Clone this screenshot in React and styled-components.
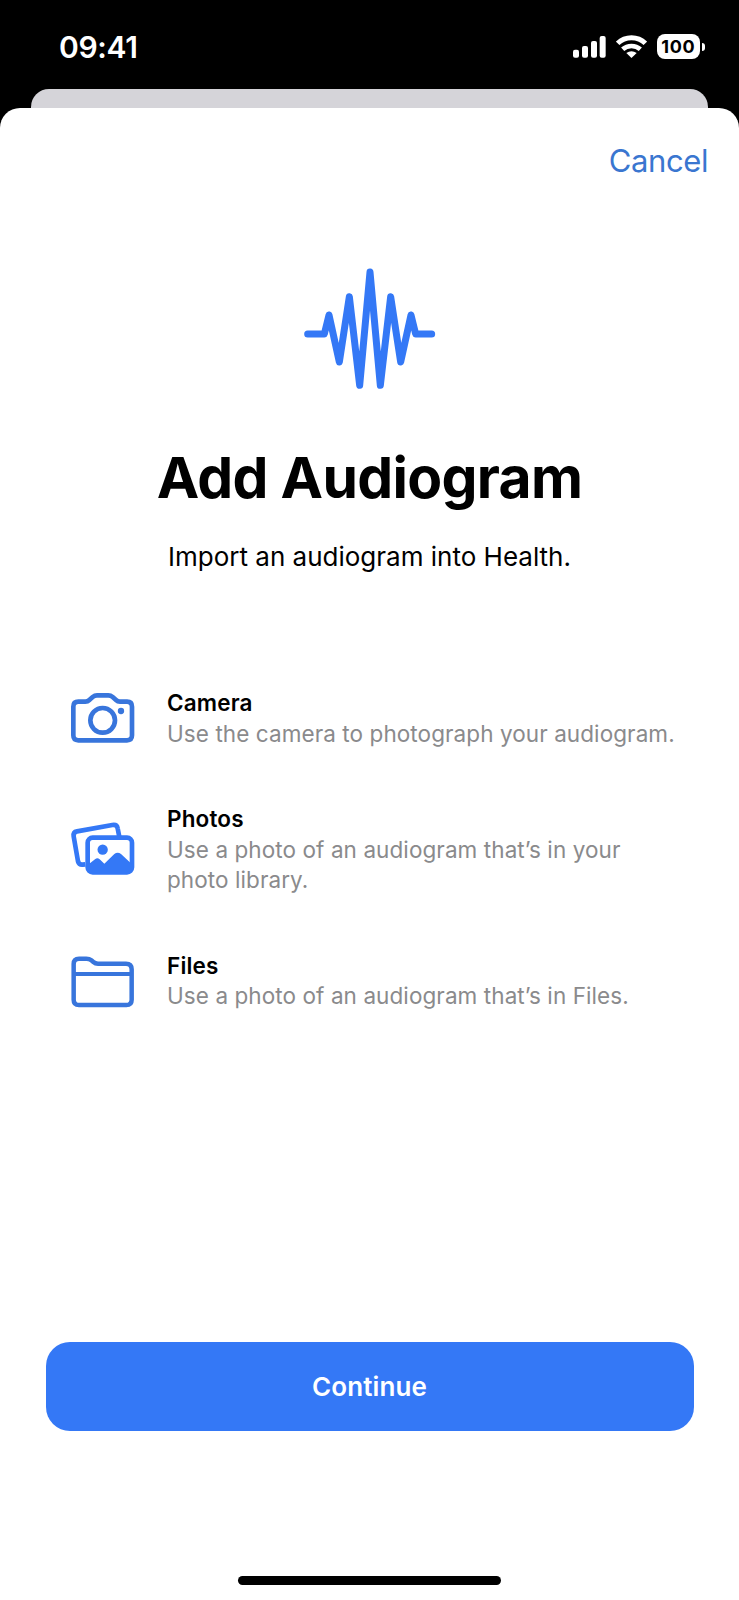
import React from 'react';
import styled, { createGlobalStyle } from 'styled-components';

const BLUE = '#3478f6';
const ICON_BLUE = '#3875dc';

const GlobalStyle = createGlobalStyle`
  body {
    margin: 0;
    background: #000;
    font-family: Inter, "Liberation Sans", sans-serif;
  }
`;

const Screen = styled.div`
  display: flex;
  flex-direction: column;
  width: 739px;
  height: 1600px;
  overflow: hidden;
  background: #000;
`;

const StatusBar = styled.header`
  display: flex;
  justify-content: space-between;
  height: 89px;
  box-sizing: border-box;
  padding: 29px 39px 0 59px;
  color: #fff;
`;

const Time = styled.div`
  font-size: 30px;
  font-weight: 600;
  line-height: 36px;
  letter-spacing: -0.35px;
`;

const StatusIcons = styled.div`
  display: flex;
  align-items: center;
  height: 35px;
`;

const WifiIcon = styled.svg`
  margin: 0 10px 0 10px;
`;

const Battery = styled.div`
  position: relative;
  width: 43.5px;
  height: 25px;
  border-radius: 8px;
  background: #fff;
  color: #000;
  font-size: 18px;
  font-weight: 650;
  line-height: 25px;
  letter-spacing: 0.6px;
  text-align: center;

  &::after {
    content: '';
    position: absolute;
    top: 9px;
    right: -5px;
    width: 3px;
    height: 8px;
    border-radius: 0 4px 4px 0;
    background: #fff;
  }
`;

const BackSheet = styled.div`
  height: 19px;
  margin: 0 31px;
  border-radius: 18px 18px 0 0;
  background: #d5d4d9;
`;

const Sheet = styled.main`
  display: flex;
  flex: 1;
  flex-direction: column;
  align-items: center;
  border-radius: 20px 20px 0 0;
  background: #fff;
`;

const CancelButton = styled.button`
  align-self: flex-end;
  margin: 33px 31px 0 0;
  padding: 0;
  border: 0;
  background: none;
  color: #3a76d0;
  font: 400 31px/40px Inter, "Liberation Sans", sans-serif;
  letter-spacing: -0.4px;
`;

const WaveIcon = styled.svg`
  margin-top: 74px;
`;

const Title = styled.h1`
  margin: 43px 0 0;
  font-size: 57px;
  font-weight: 700;
  line-height: 70px;
  letter-spacing: -0.7px;
`;

const Subtitle = styled.p`
  margin: 27px 0 0;
  font-size: 26px;
  line-height: 34px;
`;

const Options = styled.ul`
  display: flex;
  flex-direction: column;
  align-self: stretch;
  gap: 55px;
  margin: 114px 0 0;
  padding: 0 60px 0 60px;
  list-style: none;
`;

const Option = styled.li`
  display: flex;
  align-items: center;
  gap: 17px;
`;

const OptionIcon = styled.svg`
  flex: none;
  color: ${props => props.$color || ICON_BLUE};
`;

const OptionName = styled.h2`
  margin: 0;
  font-size: 22.5px;
  font-weight: 600;
  line-height: 30.5px;
  letter-spacing: 0.15px;
`;

const OptionText = styled.p`
  margin: 0;
  color: #8a8a8c;
  font-size: 22.5px;
  line-height: 30.5px;
  letter-spacing: 0.08px;
`;

const ContinueButton = styled.button`
  width: 648px;
  height: 89px;
  margin-top: auto;
  border: 0;
  border-radius: 24px;
  background: ${BLUE};
  color: #fff;
  font: 600 26px/32px Inter, "Liberation Sans", sans-serif;
  letter-spacing: 0.1px;
`;

const HomeIndicator = styled.div`
  width: 263px;
  height: 9px;
  margin: 145px 0 15px;
  border-radius: 5px;
  background: #000;
`;

const CameraIcon = () => (
  <OptionIcon width="90" height="61" viewBox="0 24 270 183" fill="none" stroke="currentColor" strokeWidth="14">
    <path d="M55 65H76Q83 65 88 60L98 51Q104 46 111 46H145Q152 46 158 51L168 60Q173 65 180 65H201Q216 65 216 80V166Q216 181 201 181H55Q40 181 40 166V80Q40 65 55 65Z" />
    <circle cx="128" cy="121" r="37" />
    <circle cx="183" cy="93" r="9.5" fill="currentColor" stroke="none" />
  </OptionIcon>
);

const PhotosIcon = () => (
  <OptionIcon $color={BLUE} width="90" height="61" viewBox="0 28 270 183" fill="none" stroke="currentColor" strokeWidth="14">
    <path d="M76 164L68 165Q57 166 54 155L41 80Q39 67 51 65L157 46Q171 44 173 56L178 82" />
    <rect x="83" y="84" width="133" height="104" rx="15" fill="#fff" />
    <circle cx="128" cy="120" r="15.5" fill="currentColor" stroke="none" />
    <path d="M84 165L105 149Q112 143 119 149L133 162L163 133Q173 126 183 133L216 164V178Q215 188 204 188H95Q84 188 84 178Z" fill="currentColor" stroke="none" />
  </OptionIcon>
);

const FilesIcon = () => (
  <OptionIcon width="90" height="61" viewBox="0 16 270 183" fill="none" stroke="currentColor" strokeWidth="13.5">
    <path d="M57 39H79Q88 39 94 44L100 49Q106 54 114 54H198Q215 54 215 71V162Q215 178 199 178H57Q41 178 41 162V55Q41 39 57 39Z" />
    <path d="M41 85H215" strokeWidth="11.5" />
  </OptionIcon>
);

const options = [
  { name: 'Camera', text: 'Use the camera to photograph your audiogram.', Icon: CameraIcon },
  { name: 'Photos', text: 'Use a photo of an audiogram that’s in your photo library.', Icon: PhotosIcon },
  { name: 'Files', text: 'Use a photo of an audiogram that’s in Files.', Icon: FilesIcon },
];

export default () => (
  <Screen>
    <GlobalStyle />
    <StatusBar>
      <Time>09:41</Time>
      <StatusIcons>
        <svg width="33" height="22" viewBox="0 0 99 66" fill="#fff">
          <rect x="0" y="41" width="18" height="24" rx="6" />
          <rect x="27" y="30" width="18" height="35" rx="6" />
          <rect x="54" y="15" width="18" height="50" rx="6" />
          <rect x="80" y="0" width="18" height="65" rx="6" />
        </svg>
        <WifiIcon width="31" height="23" viewBox="0 0 93 69" fill="none" stroke="#fff" strokeWidth="15">
          <path d="M5 25Q22 8 46.500 8T88 25" />
          <path d="M20 43Q31 33 46.500 33T73 43" strokeWidth="14" />
          <path d="M46.500 69L31 54Q46.500 43 62 54Z" fill="#fff" stroke="none" />
        </WifiIcon>
        <Battery>100</Battery>
      </StatusIcons>
    </StatusBar>
    <BackSheet />
    <Sheet>
      <CancelButton>Cancel</CancelButton>
      <WaveIcon width="160" height="145" viewBox="0 0 480 435" fill="none" stroke={BLUE} strokeWidth="21" strokeLinecap="round" strokeLinejoin="round">
        <path d="M53 237H103L117 180L148 321L178 125L209 391L240 51L271 391L302 125L332 321L363 180L377 237H425" />
      </WaveIcon>
      <Title>Add Audiogram</Title>
      <Subtitle>Import an audiogram into Health.</Subtitle>
      <Options>
        {options.map(({ name, text, Icon }) => (
          <Option key={name}>
            <Icon />
            <div>
              <OptionName>{name}</OptionName>
              <OptionText>{text}</OptionText>
            </div>
          </Option>
        ))}
      </Options>
      <ContinueButton>Continue</ContinueButton>
      <HomeIndicator />
    </Sheet>
  </Screen>
)
